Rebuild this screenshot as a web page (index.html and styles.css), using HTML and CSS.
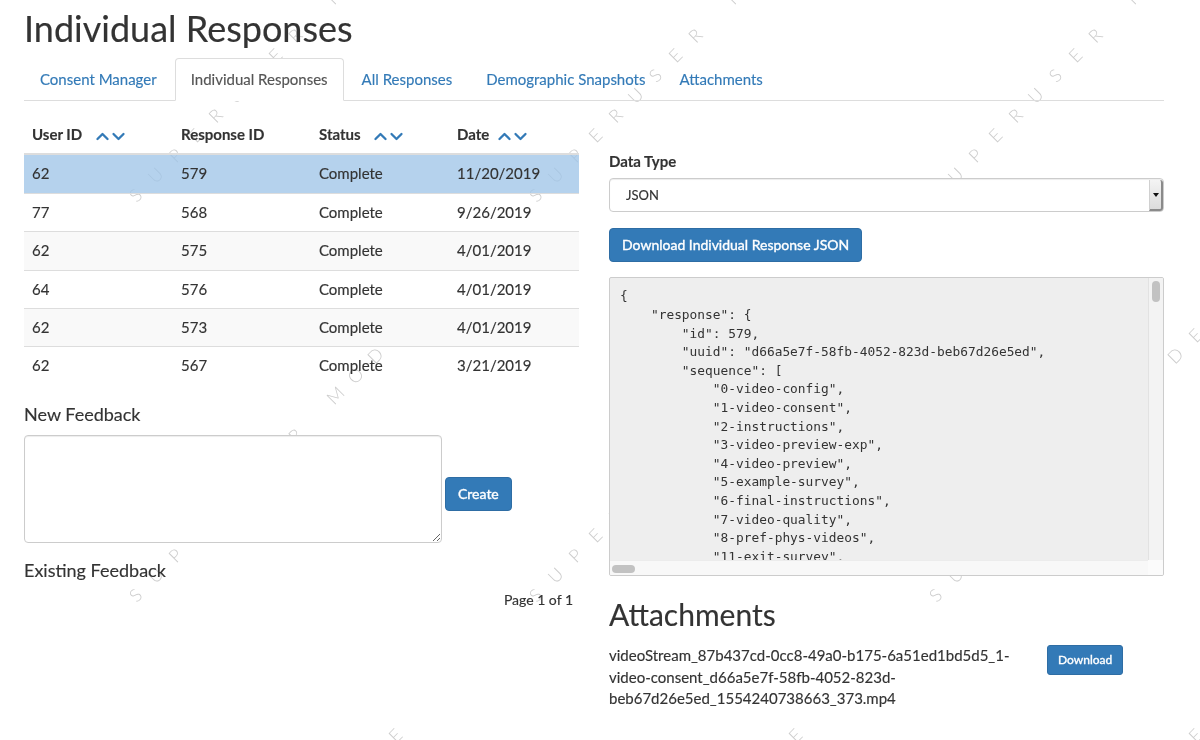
FILE: index.html
```html
<!DOCTYPE html>
<html>
<head>
<meta charset="utf-8">
<title>Individual Responses</title>
<link rel="stylesheet" href="styles.css">
</head>
<body>
<div class="wm-layer" aria-hidden="true">
  <div class="wm">
    <div class="wm-line"><span>S</span><span>U</span><span>P</span><span>E</span><span>R</span><span>U</span><span>S</span><span>E</span><span>R</span><span></span><span>M</span><span>O</span><span>D</span><span>E</span></div>
    <div class="wm-line"><span>S</span><span>U</span><span>P</span><span>E</span><span>R</span><span>U</span><span>S</span><span>E</span><span>R</span><span></span><span>M</span><span>O</span><span>D</span><span>E</span></div>
    <div class="wm-line"><span>S</span><span>U</span><span>P</span><span>E</span><span>R</span><span>U</span><span>S</span><span>E</span><span>R</span><span></span><span>M</span><span>O</span><span>D</span><span>E</span></div>
    <div class="wm-line"><span>S</span><span>U</span><span>P</span><span>E</span><span>R</span><span>U</span><span>S</span><span>E</span><span>R</span><span></span><span>M</span><span>O</span><span>D</span><span>E</span></div>
    <div class="wm-line"><span>S</span><span>U</span><span>P</span><span>E</span><span>R</span><span>U</span><span>S</span><span>E</span><span>R</span><span></span><span>M</span><span>O</span><span>D</span><span>E</span></div>
    <div class="wm-line"><span>S</span><span>U</span><span>P</span><span>E</span><span>R</span><span>U</span><span>S</span><span>E</span><span>R</span><span></span><span>M</span><span>O</span><span>D</span><span>E</span></div>
    <div class="wm-line"><span>S</span><span>U</span><span>P</span><span>E</span><span>R</span><span>U</span><span>S</span><span>E</span><span>R</span><span></span><span>M</span><span>O</span><span>D</span><span>E</span></div>
    <div class="wm-line"><span>S</span><span>U</span><span>P</span><span>E</span><span>R</span><span>U</span><span>S</span><span>E</span><span>R</span><span></span><span>M</span><span>O</span><span>D</span><span>E</span></div>
    <div class="wm-line"><span>S</span><span>U</span><span>P</span><span>E</span><span>R</span><span>U</span><span>S</span><span>E</span><span>R</span><span></span><span>M</span><span>O</span><span>D</span><span>E</span></div>
  </div>
</div>

<div class="page">
  <h1 class="title">Individual Responses</h1>
  <ul class="tabs">
    <li class="tab"><a href="#">Consent Manager</a></li>
    <li class="tab active"><a href="#">Individual Responses</a></li>
    <li class="tab"><a href="#">All Responses</a></li>
    <li class="tab"><a href="#">Demographic Snapshots</a></li>
    <li class="tab"><a href="#">Attachments</a></li>
  </ul>

  <div class="columns">
    <div class="left">
      <table class="responses">
        <thead>
          <tr>
            <th class="c1">User ID <svg class="sort" width="30" height="10" viewBox="0 0 30 10"><polyline points="1.5,8 6.5,3 11.5,8"/><polyline points="17.5,3 22.5,8 27.5,3"/></svg></th>
            <th class="c2">Response ID</th>
            <th class="c3">Status <svg class="sort" width="30" height="10" viewBox="0 0 30 10"><polyline points="1.5,8 6.5,3 11.5,8"/><polyline points="17.5,3 22.5,8 27.5,3"/></svg></th>
            <th class="c4">Date <svg class="sort sort-tight" width="30" height="10" viewBox="0 0 30 10"><polyline points="1.5,8 6.5,3 11.5,8"/><polyline points="17.5,3 22.5,8 27.5,3"/></svg></th>
          </tr>
        </thead>
        <tbody>
          <tr class="selected"><td>62</td><td>579</td><td>Complete</td><td>11/20/2019</td></tr>
          <tr><td>77</td><td>568</td><td>Complete</td><td>9/26/2019</td></tr>
          <tr class="stripe"><td>62</td><td>575</td><td>Complete</td><td>4/01/2019</td></tr>
          <tr><td>64</td><td>576</td><td>Complete</td><td>4/01/2019</td></tr>
          <tr class="stripe"><td>62</td><td>573</td><td>Complete</td><td>4/01/2019</td></tr>
          <tr><td>62</td><td>567</td><td>Complete</td><td>3/21/2019</td></tr>
        </tbody>
      </table>

      <h4 class="sub">New Feedback</h4>
      <div class="feedback-form">
        <textarea class="feedback"></textarea>
        <button class="btn btn-create">Create</button>
      </div>
      <h4 class="sub sub-existing">Existing Feedback</h4>
      <div class="pager">Page 1 of 1</div>
    </div>

    <div class="right">
      <label class="label">Data Type</label>
      <div class="select">
        <span class="select-value">JSON</span>
        <span class="select-btn"><span class="caret"></span></span>
      </div>
      <button class="btn btn-download">Download Individual Response JSON</button>

      <div class="json-box">
<pre class="json">{
    "response": {
        "id": 579,
        "uuid": "d66a5e7f-58fb-4052-823d-beb67d26e5ed",
        "sequence": [
            "0-video-config",
            "1-video-consent",
            "2-instructions",
            "3-video-preview-exp",
            "4-video-preview",
            "5-example-survey",
            "6-final-instructions",
            "7-video-quality",
            "8-pref-phys-videos",
            "11-exit-survey",
            "12-thanks"
        ],</pre>
        <div class="vbar"><div class="vthumb"></div></div>
        <div class="hbar"><div class="hthumb"></div></div>
        <div class="corner"></div>
      </div>

      <h2 class="att-title">Attachments</h2>
      <div class="att-row">
        <div class="att-name">videoStream_87b437cd-0cc8-49a0-b175-6a51ed1bd5d5_1-video-consent_d66a5e7f-58fb-4052-823d-beb67d26e5ed_1554240738663_373.mp4</div>
        <div><button class="btn btn-sm">Download</button></div>
      </div>
    </div>
  </div>
</div>
</body>
</html>
```

FILE: styles.css
```css
* { box-sizing: border-box; }

html, body {
  margin: 0;
  padding: 0;
  background: #fff;
}

body {
  font-family: Lato, "Helvetica Neue", Arial, sans-serif;
  font-size: 15px;
  line-height: 1.42857;
  color: #333;
}

/* watermark */
.wm-layer {
  position: fixed;
  top: 0;
  left: 0;
  right: 0;
  bottom: 0;
  overflow: hidden;
  z-index: 0;
  pointer-events: none;
}
.wm {
  position: absolute;
  left: 121px;
  top: 185px;
  display: grid;
  grid-template-columns: repeat(3, 400px);
  grid-auto-rows: 400px;
}
.wm-line {
  height: 20px;
  white-space: nowrap;
  transform-origin: 14.14px 10px;
  transform: rotate(-45deg);
  font-family: Lato, sans-serif;
  font-weight: 300;
  font-size: 18px;
  line-height: 20px;
  color: #cdcdcd;
}
.wm-line span {
  display: inline-block;
  width: 28.28px;
  text-align: center;
}

.page {
  position: relative;
  z-index: 1;
  padding: 0 36px 0 24px;
  -webkit-text-stroke: 0.15px currentColor;
}

.title {
  margin: 9px 0 9px;
  font-size: 36px;
  line-height: 39.6px;
  font-weight: 400;
  color: #333;
}

/* tabs */
.tabs {
  list-style: none;
  margin: 0;
  padding: 0;
  display: flex;
  border-bottom: 1px solid #ddd;
}
.tab {
  margin-right: 2px;
  margin-bottom: -1px;
}
.tab a {
  display: block;
  padding: 10px 15px;
  border: 1px solid transparent;
  border-radius: 4px 4px 0 0;
  color: #337ab7;
  text-decoration: none;
  font-size: 15px;
  line-height: 21.4px;
}
.tab.active a {
  color: #555;
  background: #fff;
  border-color: #ddd #ddd transparent;
}

.columns {
  display: grid;
  grid-template-columns: 555px 555px;
  column-gap: 30px;
  margin-top: 15px;
}

/* table */
.responses {
  width: 100%;
  border-collapse: collapse;
  border-spacing: 0;
  margin-bottom: 20px;
}
.responses th,
.responses td {
  padding: 8px;
  text-align: left;
  line-height: 21.4px;
  font-size: 15px;
}
.responses th {
  font-weight: 700;
  border-bottom: 2px solid #ddd;
  vertical-align: bottom;
  white-space: nowrap;
}
.responses td {
  border-top: 1px solid #ddd;
}
.responses tbody tr:first-child td {
  border-top: 0;
}
.c1 { width: 149px; }
.c2 { width: 138px; }
.c3 { width: 138px; }
.c4 { width: 130px; }

.sort {
  vertical-align: -1px;
  margin-left: 10px;
}
.sort-tight { margin-left: 5px; }
.sort polyline {
  fill: none;
  stroke: #337ab7;
  stroke-width: 2.3;
  stroke-linecap: round;
  stroke-linejoin: round;
}

.responses tr.selected td { background: rgba(160, 197, 232, 0.78); }
.responses tr.stripe td { background: #f9f9f9; }

.sub {
  margin: 10px 0 10px;
  font-size: 18px;
  line-height: 19.8px;
  font-weight: 400;
}
.sub-existing { margin-top: 18px; }

.feedback-form {
  display: flex;
  align-items: center;
  gap: 3px;
}
.feedback {
  width: 418px;
  height: 108px;
  border: 1px solid #ccc;
  border-radius: 4px;
  box-shadow: inset 0 1px 1px rgba(0, 0, 0, .075);
  background: #fff;
  font-family: inherit;
  font-size: 14px;
  padding: 6px 12px;
  resize: both;
  margin: 0;
}

.btn {
  display: inline-block;
  font-family: Lato, "Helvetica Neue", Arial, sans-serif;
  font-size: 14px;
  line-height: 20px;
  padding: 6px 12px;
  color: #fff;
  background: #337ab7;
  border: 1px solid #2e6da4;
  border-radius: 4px;
  cursor: pointer;
  white-space: nowrap;
  -webkit-text-stroke: 0.35px #fff;
}
.btn-create {
  margin-top: 11px;
}
.btn-sm {
  font-size: 12px;
  line-height: 18px;
  padding: 5px 10px;
  border-radius: 3px;
}

.pager {
  text-align: right;
  font-size: 14px;
  line-height: 20px;
  padding-right: 6px;
}

/* right column */
.right {
  padding-top: 35px;
}
.label {
  display: block;
  font-weight: 700;
  font-size: 15px;
  line-height: 21.4px;
  margin-bottom: 6px;
}
.select {
  display: flex;
  height: 34px;
  border: 1px solid #ccc;
  border-radius: 4px;
  background: #fff;
  box-shadow: inset 0 1px 1px rgba(0, 0, 0, .075);
}
.select-value {
  flex: 1;
  padding-left: 16px;
  font-size: 13px;
  line-height: 32px;
  color: #333;
}
.select-btn {
  width: 14px;
  margin: 1px 0 0 0;
  background: linear-gradient(#f4f4f4, #dcdcdc);
  border-left: 1px solid #d0d0d0;
  border-right: 2px solid #8a8a8a;
  border-bottom: 2px solid #8a8a8a;
  border-radius: 0 3px 3px 0;
  display: flex;
  align-items: center;
  justify-content: center;
}
.caret {
  width: 0;
  height: 0;
  border-left: 3px solid transparent;
  border-right: 3px solid transparent;
  border-top: 4px solid #111;
}
.btn-download {
  margin-top: 16px;
}

.json-box {
  margin-top: 15px;
  height: 299px;
  display: grid;
  grid-template-columns: 1fr 15px;
  grid-template-rows: 1fr 15px;
  border: 1px solid #ccc;
  border-radius: 2px;
  background: #eee;
  overflow: hidden;
}
.json {
  margin: 0;
  padding: 9px 10px 0;
  overflow: hidden;
  font-family: "DejaVu Sans Mono", "Liberation Mono", monospace;
  font-size: 12.85px;
  line-height: 18.6px;
  color: #333;
  white-space: pre;
  -webkit-text-stroke: 0;
}
.vbar {
  background: #f3f3f3;
  border-left: 1px solid #e2e2e2;
  padding: 3px 0 0 3px;
}
.vthumb {
  width: 8px;
  height: 21px;
  border-radius: 4px;
  background: #c2c2c2;
}
.hbar {
  background: #f8f8f8;
  border-top: 1px solid #ececec;
  padding: 4px 0 0 2px;
}
.hthumb {
  width: 23px;
  height: 8px;
  border-radius: 4px;
  background: #c2c2c2;
}
.corner {
  background: #fbfbfb;
}

.att-title {
  margin: 22px 0 14px;
  font-size: 30px;
  line-height: 33px;
  font-weight: 400;
}
.att-row {
  display: grid;
  grid-template-columns: 420px auto;
  column-gap: 18px;
  align-items: start;
}
.att-name {
  font-size: 15px;
  line-height: 21.4px;
}
```
